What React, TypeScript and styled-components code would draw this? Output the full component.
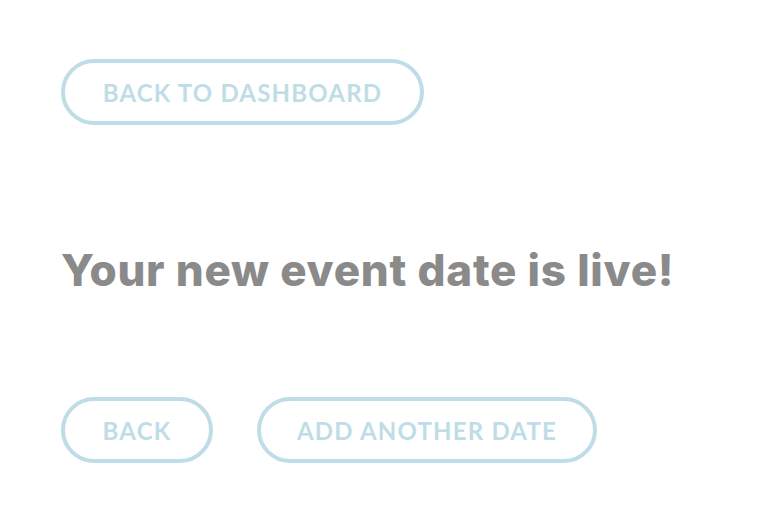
import styled, { createGlobalStyle } from 'styled-components'

const GlobalStyle = createGlobalStyle`
    body {
        margin: 0;
        background: #ffffff;
        font-family: Lato, "Open Sans", sans-serif;
    }
`

const Page = styled.div`
    padding: 59px 0 0 61px;
    display: flex;
    flex-direction: column;
    align-items: flex-start;
`

const PillButton = styled.button<{ $width: number }>`
    box-sizing: border-box;
    width: ${p => p.$width}px;
    height: 66px;
    border: 4px solid #bfdde6;
    border-radius: 33px;
    background: #ffffff;
    color: #bfdde6;
    font-family: Lato, "Open Sans", sans-serif;
    font-weight: 700;
    font-size: 24px;
    letter-spacing: 1.2px;
    text-transform: uppercase;
    display: flex;
    align-items: center;
    justify-content: center;
    padding: 0;
    cursor: pointer;
`

const Heading = styled.h1`
    margin: 117px 0 0 0;
    font-family: Inter, Lato, sans-serif;
    font-weight: 800;
    font-size: 44px;
    line-height: 56px;
    color: #8a8a8a;
    letter-spacing: 0.75px;
`

const Actions = styled.div`
    display: flex;
    gap: 44px;
    margin-top: 99px;
`

function App() {
    return (
        <>
            <GlobalStyle />
            <Page>
                <PillButton $width={363}>Back to dashboard</PillButton>
                <Heading>Your new event date is live!</Heading>
                <Actions>
                    <PillButton $width={152}>Back</PillButton>
                    <PillButton $width={340}>Add another date</PillButton>
                </Actions>
            </Page>
        </>
    )
}

export default App
